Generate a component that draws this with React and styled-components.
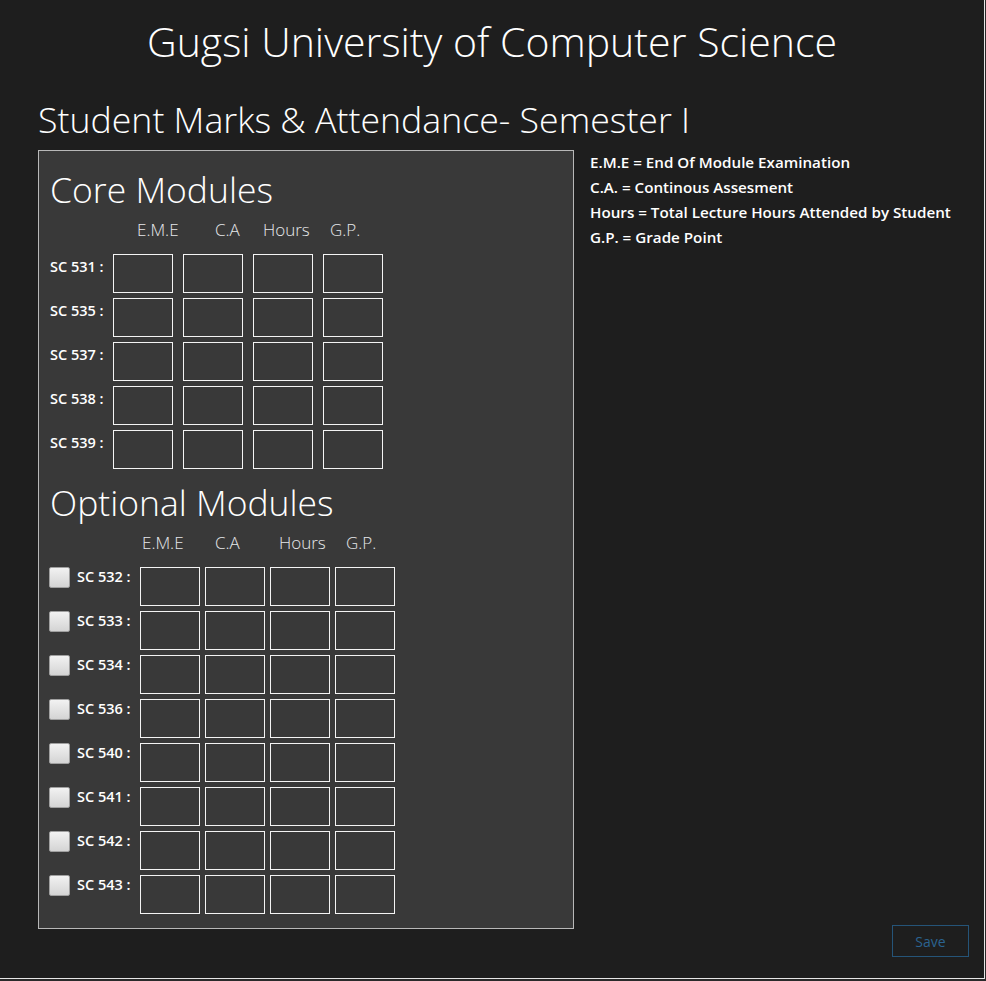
import styled, { createGlobalStyle } from 'styled-components';

const GlobalStyle = createGlobalStyle`
  body {
    margin: 0;
    background-color: #2a2a2a;
    font-family: "Open Sans", "Noto Sans", sans-serif;
  }
`;

const Frame = styled.div`
  width: 984px;
  height: 978px;
  display: flex;
  flex-direction: column;
  background-color: #1e1e1e;
  border-right: 1px solid #e6e6e6;
  border-bottom: 1px solid #e6e6e6;
  color: #ffffff;
`;

const Title = styled.h1`
  margin: 15px 0 0;
  text-align: center;
  font-size: 41px;
  font-weight: 300;
  line-height: 52px;
`;

const Subtitle = styled.h2`
  margin: 30px 0 0 38px;
  font-size: 35.7px;
  font-weight: 300;
  line-height: 44px;
`;

const Body = styled.div`
  flex: 1;
  display: flex;
  padding-left: 38px;
  margin-top: 9px;
`;

const Panel = styled.div`
  width: 536px;
  height: 779px;
  box-sizing: border-box;
  background-color: #393939;
  border: 1px solid #b8b8b8;
  padding: 16px 0 0 11px;
`;

const SectionTitle = styled.h3`
  margin: ${p => p.$top || 0}px 0 0;
  font-size: 35.5px;
  font-weight: 300;
  line-height: 44px;
`;

const HeaderRow = styled.div`
  display: flex;
  height: 24px;
  align-items: center;
  margin: 6px 0 13px;
  padding-left: ${p => p.$start}px;
`;

const HeaderCell = styled.span`
  width: ${p => p.$w}px;
  font-size: 17px;
  font-weight: 300;
  color: #e6e8ea;
`;

const Rows = styled.div`
  display: flex;
  flex-direction: column;
  gap: 5px;
`;

const Row = styled.div`
  display: flex;
  align-items: flex-start;
`;

const Label = styled.span`
  width: ${p => p.$w}px;
  padding-top: ${p => p.$pad}px;
  font-size: 14.5px;
  font-weight: 600;
  color: #ffffff;
  white-space: nowrap;
`;

const Boxes = styled.div`
  display: flex;
  gap: ${p => p.$gap}px;
`;

const Box = styled.div`
  width: 60px;
  height: 39px;
  box-sizing: border-box;
  border: 1.5px solid #f4f4f4;
`;

const Check = styled.div`
  width: 21px;
  height: 21px;
  box-sizing: border-box;
  margin: 0 7px 0 -1px;
  border: 1px solid #a0a0a0;
  border-radius: 2px;
  background: linear-gradient(#f2f2f2, #d4d4d4);
`;

const Side = styled.div`
  flex: 1;
  display: flex;
  flex-direction: column;
  padding: 0 0 21px 16px;
`;

const Legend = styled.div`
  display: flex;
  flex-direction: column;
  font-size: 15.2px;
  font-weight: 600;
  line-height: 25px;
`;

const SaveButton = styled.button`
  margin-top: auto;
  align-self: flex-end;
  margin-right: 15px;
  width: 77px;
  height: 32px;
  background: transparent;
  border: 1px solid #255478;
  color: #2b6390;
  font-family: "Open Sans", sans-serif;
  font-size: 14px;
`;

const core = ['531', '535', '537', '538', '539'];
const optional = ['532', '533', '534', '536', '540', '541', '542', '543'];
const legend = [
  'E.M.E = End Of Module Examination',
  'C.A. = Continous Assesment',
  'Hours = Total Lecture Hours Attended by Student',
  'G.P. = Grade Point',
];

const BoxSet = ({ gap }) => (
  <Boxes $gap={gap}>
    <Box />
    <Box />
    <Box />
    <Box />
  </Boxes>
);

export default function App() {
  return (
    <Frame>
      <GlobalStyle />
      <Title>Gugsi University of Computer Science</Title>
      <Subtitle>Student Marks &amp; Attendance- Semester I</Subtitle>
      <Body>
        <Panel>
          <SectionTitle>Core Modules</SectionTitle>
          <HeaderRow $start={87}>
            <HeaderCell $w={78}>E.M.E</HeaderCell>
            <HeaderCell $w={48}>C.A</HeaderCell>
            <HeaderCell $w={67}>Hours</HeaderCell>
            <HeaderCell $w={40}>G.P.</HeaderCell>
          </HeaderRow>
          <Rows>
            {core.map(c => (
              <Row key={c}>
                <Label $w={63} $pad={3}>SC {c} :</Label>
                <BoxSet gap={10} />
              </Row>
            ))}
          </Rows>
          <SectionTitle $top={11}>Optional Modules</SectionTitle>
          <HeaderRow $start={92}>
            <HeaderCell $w={73}>E.M.E</HeaderCell>
            <HeaderCell $w={64}>C.A</HeaderCell>
            <HeaderCell $w={67}>Hours</HeaderCell>
            <HeaderCell $w={40}>G.P.</HeaderCell>
          </HeaderRow>
          <Rows>
            {optional.map(c => (
              <Row key={c}>
                <Check />
                <Label $w={63} $pad={0}>SC {c} :</Label>
                <BoxSet gap={5} />
              </Row>
            ))}
          </Rows>
        </Panel>
        <Side>
          <Legend>
            {legend.map(l => (
              <span key={l}>{l}</span>
            ))}
          </Legend>
          <SaveButton>Save</SaveButton>
        </Side>
      </Body>
    </Frame>
  );
}
